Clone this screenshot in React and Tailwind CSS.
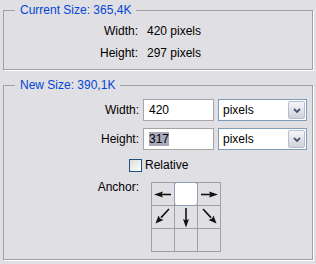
import React from "react";

const Arrow = ({ line, head }) => (
    <svg width="22" height="22" viewBox="0 0 22 22">
        <path d={line} stroke="#111" strokeWidth="1.6" fill="none" />
        <polygon points={head} fill="#111" />
    </svg>
);

const Chevron = () => (
    <svg width="8" height="5" viewBox="0 0 8 5">
        <polyline points="1,1 4,4 7,1" stroke="#4a5670" strokeWidth="1.8" fill="none" />
    </svg>
);

const Select = () => (
    <div className="h-[22px] border border-[#7f9db9] bg-white flex items-center justify-between pl-[4px] pr-px">
        <span>pixels</span>
        <div className="w-[17px] h-[18px] rounded-[2px] border border-[#b8bdcc] bg-linear-to-b from-[#f6f6f9] to-[#cfd1db] flex items-center justify-center">
            <Chevron />
        </div>
    </div>
);

const cells = [
    <Arrow key="l" line="M8 11.5H19" head="2,11.5 11,8.5 9.5,11.5 11,14.5" />,
    null,
    <Arrow key="r" line="M3 11.5H14" head="20,11.5 11,8.5 12.5,11.5 11,14.5" />,
    <Arrow key="dl" line="M17 3L9 11.6" head="3.5,17.5 6.5,9.5 8,12.5 11.5,14" />,
    <Arrow key="d" line="M11 2V15" head="11,21.5 8,13 11,14.5 14,13" />,
    <Arrow key="dr" line="M5 3L13 11.6" head="18.5,17.5 15.5,9.5 14,12.5 10.5,14" />,
    null,
    null,
    null,
];

const App = () => {
    return (
        <div
            className="w-[316px] h-[264px] bg-[#e0dfe3] pl-[3px] pt-[10px] text-[12px] leading-[14px] text-black"
            style={{ fontFamily: '"Liberation Sans", Arial, sans-serif' }}
        >
            {/* current size */}
            <div className="w-[310px] h-[60px] border border-[#a0a0a0] shadow-[1px_1px_0_#fff]">
                <span className="block w-fit -mt-[8px] ml-[11px] px-[5px] bg-[#e0dfe3] text-[#0046d5]">
                    Current Size: 365,4K
                </span>
                <div className="grid grid-cols-[134px_1fr] gap-x-[9px] gap-y-[8px] mt-[7px]">
                    <span className="text-right">Width:</span>
                    <span>420 pixels</span>
                    <span className="text-right">Height:</span>
                    <span>297 pixels</span>
                </div>
            </div>

            {/* new size */}
            <div className="w-[310px] h-[175px] mt-[15px] border border-[#a0a0a0] shadow-[1px_1px_0_#fff]">
                <span className="block w-fit -mt-[8px] ml-[11px] px-[5px] bg-[#e0dfe3] text-[#0046d5]">
                    New Size: 390,1K
                </span>
                <div className="grid grid-cols-[135px_71px_89px] gap-x-[4px] gap-y-[7px] mt-[7px] items-center">
                    <span className="text-right">Width:</span>
                    <div className="h-[22px] border border-[#a5a5a8] bg-white pl-[5px] flex items-center">420</div>
                    <Select />
                    <span className="text-right">Height:</span>
                    <div className="h-[22px] border border-[#a5a5a8] bg-white pl-[5px] flex items-center">
                        <span className="bg-[#a8aab9]">317</span>
                    </div>
                    <Select />
                </div>

                <div className="flex items-center gap-[3px] pl-[125px] mt-[8px]">
                    <div className="w-[13px] h-[13px] border border-[#1c5180] bg-linear-to-br from-[#dcdcd7] to-white" />
                    <span>Relative</span>
                </div>

                <div className="flex items-start mt-[8px]">
                    <span className="w-[135px] text-right">Anchor:</span>
                    <div className="ml-[12px] mt-[2px] grid grid-cols-[22px_22px_22px] gap-px p-px bg-[#a0a0a0]">
                        {cells.map((c, i) =>
                            i === 1 ? (
                                <div
                                    key={i}
                                    className="-m-px w-[24px] h-[24px] bg-white border border-[#8f9db8] rounded-[3px] relative"
                                />
                            ) : (
                                <div key={i} className="w-[22px] h-[22px] bg-[#e0dfe3]">
                                    {c}
                                </div>
                            )
                        )}
                    </div>
                </div>
            </div>
        </div>
    );
};

export default App;
